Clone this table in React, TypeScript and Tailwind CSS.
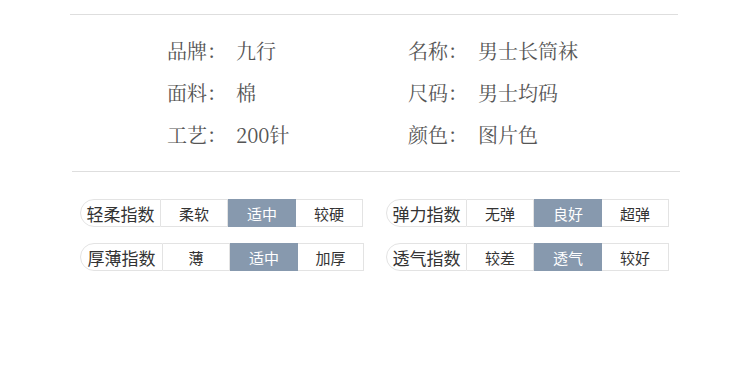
import React from "react";

const serif = {
  fontFamily:
    '"Noto Serif CJK SC", "Liberation Serif", "Noto Sans CJK SC", serif',
};

type Row = { label: string; opts: string[]; sel: number; w: number[] };

function Scale({ label, opts, sel, w }: Row) {
  return (
    <div className="flex h-[28px] text-[#333]">
      <div
        className="flex items-center justify-center rounded-l-full border border-[#e3e3e3] text-[17px] leading-none"
        style={{ width: w[0] }}
      >
        {label}
      </div>
      {opts.map((o, i) => (
        <div
          key={o}
          style={{ width: w[i + 1] }}
          className={
            i === sel
              ? "flex items-center justify-center bg-[#8799ae] text-[15px] leading-none text-white"
              : "flex items-center justify-center border-y border-r border-[#e3e3e3] text-[15px] leading-none"
          }
        >
          {o}
        </div>
      ))}
    </div>
  );
}

export default function App() {
  const info = [
    ["品牌：", "九行", "名称：", "男士长筒袜"],
    ["面料：", "棉", "尺码：", "男士均码"],
    ["工艺：", "200针", "颜色：", "图片色"],
  ];
  return (
    <div
      className="h-[375px] w-[750px] overflow-hidden bg-white"
      style={{ fontFamily: '"Noto Sans CJK SC", "Noto Sans", sans-serif' }}
    >
      <div className="pt-[14px]">
        <div className="mx-[70px] w-[608px] border-t border-[#dedede]" />
        <div className="flex flex-col pb-[15px] pl-[167px] pt-[15px] text-[20px] text-[#555]" style={serif}>
          {info.map((r) => (
            <div key={r[0]} className="flex h-[42px] items-center">
              <div className="w-[69px]">{r[0]}</div>
              <div className="w-[172px]">{r[1]}</div>
              <div className="w-[70px]">{r[2]}</div>
              <div>{r[3]}</div>
            </div>
          ))}
        </div>
        <div className="ml-[72px] w-[608px] border-t border-[#dedede]" />
      </div>
      <div className="flex flex-col gap-[16px] pt-[27px]">
        <div className="flex">
          <div className="ml-[80px]">
            <Scale label="轻柔指数" opts={["柔软", "适中", "较硬"]} sel={1} w={[81, 67, 68, 67]} />
          </div>
          <div className="ml-[23px]">
            <Scale label="弹力指数" opts={["无弹", "良好", "超弹"]} sel={1} w={[81, 67, 68, 67]} />
          </div>
        </div>
        <div className="flex">
          <div className="ml-[80px]">
            <Scale label="厚薄指数" opts={["薄", "适中", "加厚"]} sel={1} w={[83, 67, 68, 66]} />
          </div>
          <div className="ml-[22px]">
            <Scale label="透气指数" opts={["较差", "透气", "较好"]} sel={1} w={[81, 67, 68, 67]} />
          </div>
        </div>
      </div>
    </div>
  );
}
